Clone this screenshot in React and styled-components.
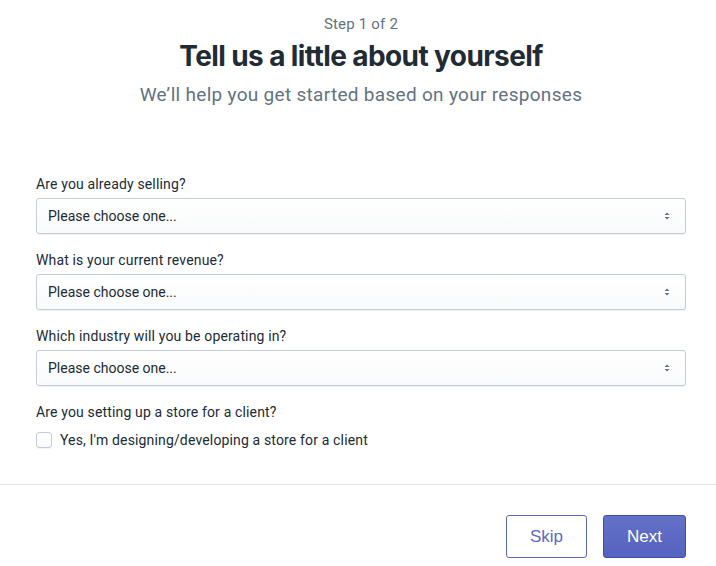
import React from 'react';
import styled, { createGlobalStyle } from 'styled-components';

const GlobalStyle = createGlobalStyle`
  * { box-sizing: border-box; }
  body {
    margin: 0;
    background: #ffffff;
    font-family: Roboto, "Liberation Sans", Arial, sans-serif;
    color: #212b36;
  }
`;

const questions = [
  { id: 'selling', label: 'Are you already selling?' },
  { id: 'revenue', label: 'What is your current revenue?' },
  { id: 'industry', label: 'Which industry will you be operating in?' },
];

function Chevrons() {
  return (
    <svg width="8" height="12" viewBox="0 0 8 12" aria-hidden="true">
      <path d="M4 2.5 L6.5 5 H1.5 Z" fill="#637381" />
      <path d="M4 9.5 L1.5 7 H6.5 Z" fill="#637381" />
    </svg>
  );
}

export default function App() {
  return (
    <Page>
      <GlobalStyle />
      <Header>
        <Step>Step 1 of 2</Step>
        <Title>Tell us a little about yourself</Title>
        <Subtitle>We’ll help you get started based on your responses</Subtitle>
      </Header>

      <Form>
        {questions.map((q) => (
          <Field key={q.id}>
            <Label htmlFor={q.id}>{q.label}</Label>
            <SelectBox id={q.id}>
              <span>Please choose one...</span>
              <Chevrons />
            </SelectBox>
          </Field>
        ))}

        <Field>
          <Label as="div">Are you setting up a store for a client?</Label>
          <CheckRow>
            <CheckBox />
            <span>Yes, I'm designing/developing a store for a client</span>
          </CheckRow>
        </Field>
      </Form>

      <Footer>
        <Button>Skip</Button>
        <Button primary>Next</Button>
      </Footer>
    </Page>
  );
}

const Page = styled.div`
  width: 716px;
  height: 566px;
  display: flex;
  flex-direction: column;
`;

const Header = styled.header`
  display: flex;
  flex-direction: column;
  align-items: center;
  padding-top: 14px;
  padding-left: 6px;
  text-align: center;
`;

const Step = styled.div`
  font-family: Roboto, "Liberation Sans", sans-serif;
  font-size: 15px;
  line-height: 20px;
  letter-spacing: 0.2px;
  color: #637381;
`;

const Title = styled.h1`
  margin: 4px 0 0;
  font-family: Inter, "Liberation Sans", sans-serif;
  font-weight: 700;
  font-size: 28px;
  line-height: 36px;
  letter-spacing: -0.6px;
  color: #212b36;
`;

const Subtitle = styled.p`
  margin: 9px 0 0;
  font-family: Roboto, "Liberation Sans", sans-serif;
  font-size: 19px;
  line-height: 24px;
  letter-spacing: 0.3px;
  color: #637381;
`;

const Form = styled.div`
  flex: 1;
  display: flex;
  flex-direction: column;
  gap: 16px;
  padding: 67px 30px 0 36px;
  border-bottom: 1px solid #dfe3e8;
`;

const Field = styled.div`
  display: flex;
  flex-direction: column;
  gap: 4px;
`;

const Label = styled.label`
  font-size: 14px;
  line-height: 20px;
  letter-spacing: 0.15px;
  color: #212b36;
`;

const SelectBox = styled.div`
  height: 36px;
  display: flex;
  align-items: center;
  justify-content: space-between;
  padding: 0 14px 0 11px;
  border: 1px solid #c4cdd5;
  border-radius: 3px;
  background: linear-gradient(180deg, #ffffff, #f9fafb);
  box-shadow: 0 1px 0 0 rgba(22, 29, 37, 0.05);
  font-size: 14px;
  color: #212b36;
`;

const CheckRow = styled.label`
  display: flex;
  align-items: center;
  gap: 8px;
  margin-top: 4px;
  font-size: 14px;
  line-height: 20px;
  letter-spacing: 0.15px;
  color: #212b36;
`;

const CheckBox = styled.span`
  width: 16px;
  height: 16px;
  border: 1px solid #c4cdd5;
  border-radius: 3px;
  background: linear-gradient(180deg, #ffffff, #f9fafb);
  box-shadow: 0 1px 0 0 rgba(22, 29, 37, 0.05);
`;

const Footer = styled.footer`
  height: 81px;
  display: flex;
  align-items: flex-start;
  justify-content: flex-end;
  gap: 16px;
  padding: 30px 30px 0;
`;

const Button = styled.button`
  height: 43px;
  min-width: ${(p) => (p.primary ? '83px' : '81px')};
  padding: 0 16px;
  border-radius: 3px;
  border: 1px solid ${(p) => (p.primary ? '#3f4eae' : '#5c6ac4')};
  background: ${(p) => (p.primary ? 'linear-gradient(180deg, #6371c7, #5563c1)' : '#ffffff')};
  color: ${(p) => (p.primary ? '#ffffff' : '#5c6ac4')};
  font-family: "Liberation Sans", Arial, sans-serif;
  font-size: 17px;
  cursor: pointer;
`;
